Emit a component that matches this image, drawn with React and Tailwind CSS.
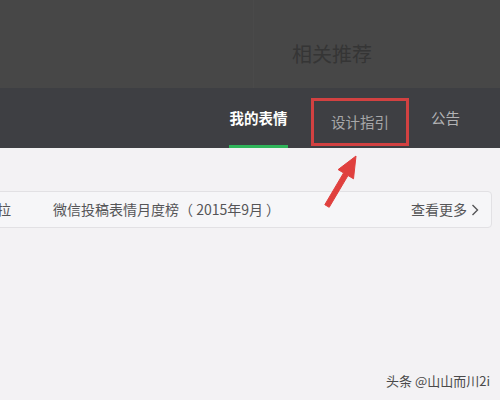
export default function App() {
  const font = { fontFamily: '"Noto Sans CJK SC", "Microsoft YaHei", "Noto Sans", sans-serif' };
  return (
    <div className="relative w-[500px] h-[400px] overflow-hidden flex flex-col bg-[#f3f2f4]" style={font}>
      {/* Top dark area */}
      <div className="h-[88px] flex bg-[#474747] shrink-0">
        <div className="w-[254px] border-r border-[#4a4a4a]" />
        <div className="pl-[38px] pt-[40px] text-[20px] leading-[28px] text-[#353535]">相关推荐</div>
      </div>
      {/* Nav bar */}
      <div className="h-[60px] flex items-stretch bg-[#3e3f43] shrink-0 pl-[229px] text-[14.5px]">
        <div className="w-[59px] flex items-center justify-center pt-[3px] border-b-[3px] border-[#2fb55a] text-white font-bold whitespace-nowrap">
          我的表情
        </div>
        <div className="ml-[23px] mt-[10px] h-[48px] w-[98px] border-[3px] border-[#d24141] flex items-center justify-center text-[#a7a7a9] whitespace-nowrap">
          设计指引
        </div>
        <div className="ml-[22px] flex items-center text-[#b3b3b5] whitespace-nowrap">公告</div>
      </div>
      {/* Content */}
      <div className="flex-1 pt-[43px]">
        <div className="-ml-[22px] mr-[8px] h-[37px] pl-[18px] rounded-[4px] border border-[#e2e1e4] bg-[#f6f6f8] flex items-center text-[14px] text-[#555557]">
          <span className="w-[56px] shrink-0 whitespace-nowrap">拉</span>
          <span className="whitespace-nowrap">微信投稿表情月度榜（ 2015年9月 ）</span>
          <span className="ml-auto mr-[12px] flex items-center gap-[4px] whitespace-nowrap">
            查看更多
            <svg width="8" height="12" viewBox="0 0 8 12">
              <path d="M1.5 1 L6.5 6 L1.5 11" fill="none" stroke="#555557" strokeWidth="1.4" />
            </svg>
          </span>
        </div>
      </div>
      {/* Red arrow annotation */}
      <svg className="absolute left-0 top-0 pointer-events-none" width="500" height="400" viewBox="0 0 500 400">
        <polygon
          points="356,156 353.5,178.8 348,175.5 329.2,207.3 324.8,204.7 343.6,172.9 338.1,169.6"
          fill="#e0403e"
          stroke="#e0403e"
          strokeWidth="1"
          strokeLinejoin="round"
        />
      </svg>
      {/* Watermark */}
      <div className="absolute right-[10px] bottom-[11px] text-[13px] leading-[16px] text-[#4a4a4a] whitespace-nowrap">
        头条 @山山而川2i
      </div>
    </div>
  );
}
